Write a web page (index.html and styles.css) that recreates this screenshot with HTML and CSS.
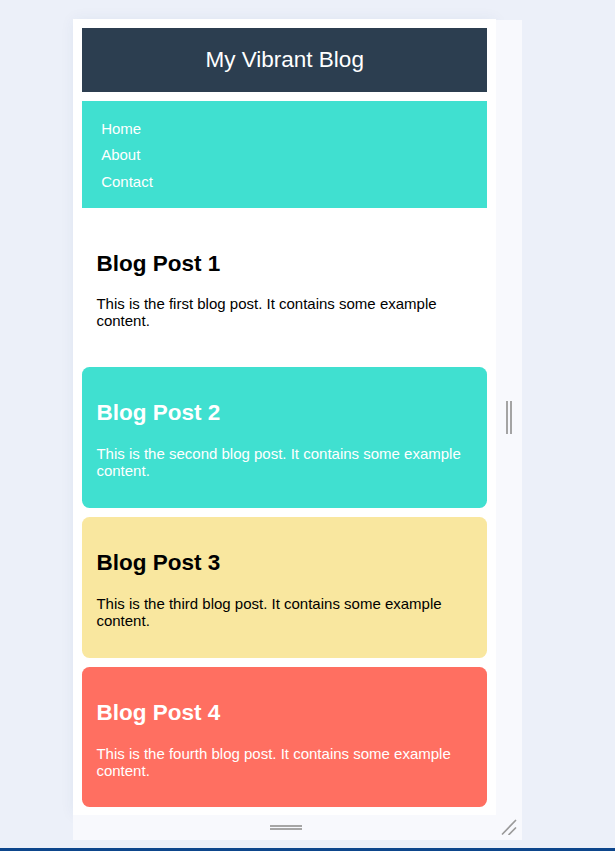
FILE: index.html
```html
<!DOCTYPE html>
<html lang="en">
<head>
<meta charset="utf-8">
<title>My Vibrant Blog</title>
<link rel="stylesheet" href="styles.css">
</head>
<body>
<div class="stage">
  <div class="frame">
    <div class="panel">
      <header class="site-header">
        <h1 class="site-title">My Vibrant Blog</h1>
      </header>
      <nav class="site-nav">
        <ul class="nav-list">
          <li><a class="nav-link" href="#">Home</a></li>
          <li><a class="nav-link" href="#">About</a></li>
          <li><a class="nav-link" href="#">Contact</a></li>
        </ul>
      </nav>
      <article class="post post-plain">
        <h2 class="post-title">Blog Post 1</h2>
        <p class="post-text">This is the first blog post. It contains some example content.</p>
      </article>
      <article class="post post-teal">
        <h2 class="post-title">Blog Post 2</h2>
        <p class="post-text">This is the second blog post. It contains some example content.</p>
      </article>
      <article class="post post-yellow">
        <h2 class="post-title">Blog Post 3</h2>
        <p class="post-text">This is the third blog post. It contains some example content.</p>
      </article>
      <article class="post post-coral">
        <h2 class="post-title">Blog Post 4</h2>
        <p class="post-text">This is the fourth blog post. It contains some example content.</p>
      </article>
    </div>
    <div class="strip strip-right"><span class="grip-v"></span></div>
    <div class="strip strip-bottom"><span class="grip-h"></span></div>
    <div class="strip strip-corner">
      <svg class="corner-grip" width="16" height="16" viewBox="0 0 16 16">
        <line x1="1.5" y1="15" x2="14.5" y2="1.5" stroke="#9a9a9a" stroke-width="1.7" stroke-linecap="round"/>
        <line x1="8" y1="15.5" x2="14.5" y2="9" stroke="#9a9a9a" stroke-width="1.7" stroke-linecap="round"/>
      </svg>
    </div>
  </div>
</div>
<div class="bottom-bar"></div>
</body>
</html>
```

FILE: styles.css
```css
html, body {
  margin: 0;
  padding: 0;
}
body {
  background: #ecf0f9;
  font-family: Arial, "Liberation Sans", sans-serif;
  min-height: 100vh;
  display: flex;
  flex-direction: column;
}
.stage {
  padding: 19px 0 0 73px;
}
.frame {
  display: grid;
  grid-template-columns: 423.4px 25.6px;
  grid-template-rows: 796px 25px;
}
.panel {
  background: #ffffff;
  padding: 9.375px 9.375px 0 9.375px;
  overflow: hidden;
  box-shadow: 0 0 14px rgba(40, 60, 120, 0.06);
}
.strip {
  background: #f8f9fd;
}
.strip-right {
  margin-top: 1px;
  display: flex;
  align-items: center;
  justify-content: center;
}
.grip-v {
  display: block;
  width: 1.5px;
  height: 33px;
  border-left: 2.6px solid #a4a4a4;
  border-right: 2.8px solid #a4a4a4;
}
.strip-bottom {
  display: flex;
  justify-content: center;
  padding-top: 9.5px;
  box-sizing: border-box;
}
.grip-h {
  display: block;
  width: 32px;
  height: 1.4px;
  border-top: 2.2px solid #a6a6a6;
  border-bottom: 2.2px solid #a6a6a6;
  margin-right: -2px;
}
.strip-corner {
  position: relative;
}
.corner-grip {
  position: absolute;
  left: 5px;
  top: 4px;
}
.site-header {
  background: #2c3e50;
  padding: 18.75px;
  margin-bottom: 9.375px;
  text-align: center;
}
.site-title {
  margin: 0;
  font-size: 22.5px;
  font-weight: normal;
  color: #ffffff;
  line-height: 25.9px;
}
.site-nav {
  background: #40e0d0;
  padding: 18.5px 18.75px 18px;
  margin-bottom: 9.8px;
}
.nav-list {
  list-style: none;
  margin: 0;
  padding: 0;
  display: flex;
  flex-direction: column;
  gap: 9.2px;
}
.nav-link {
  display: block;
  color: #ffffff;
  text-decoration: none;
  font-size: 15px;
  line-height: 17.25px;
}
.post {
  padding: 14.3px 14.06px 13.2px;
  margin-bottom: 9.6px;
  border-radius: 7.5px;
}
.post-title {
  font-size: 22.5px;
  line-height: 25.9px;
  font-weight: bold;
  margin: 18.7px 0;
}
.post-text {
  font-size: 15px;
  line-height: 17.25px;
  margin: 15px 0;
}
.post-plain {
  background: #ffffff;
  color: #000000;
}
.post-teal {
  background: #40e0d0;
  color: #ffffff;
}
.post-yellow {
  background: #f9e79f;
  color: #000000;
}
.post-coral {
  background: #ff6f61;
  color: #ffffff;
}
.bottom-bar {
  margin-top: auto;
  height: 3px;
  background: #0d468c;
}
```
